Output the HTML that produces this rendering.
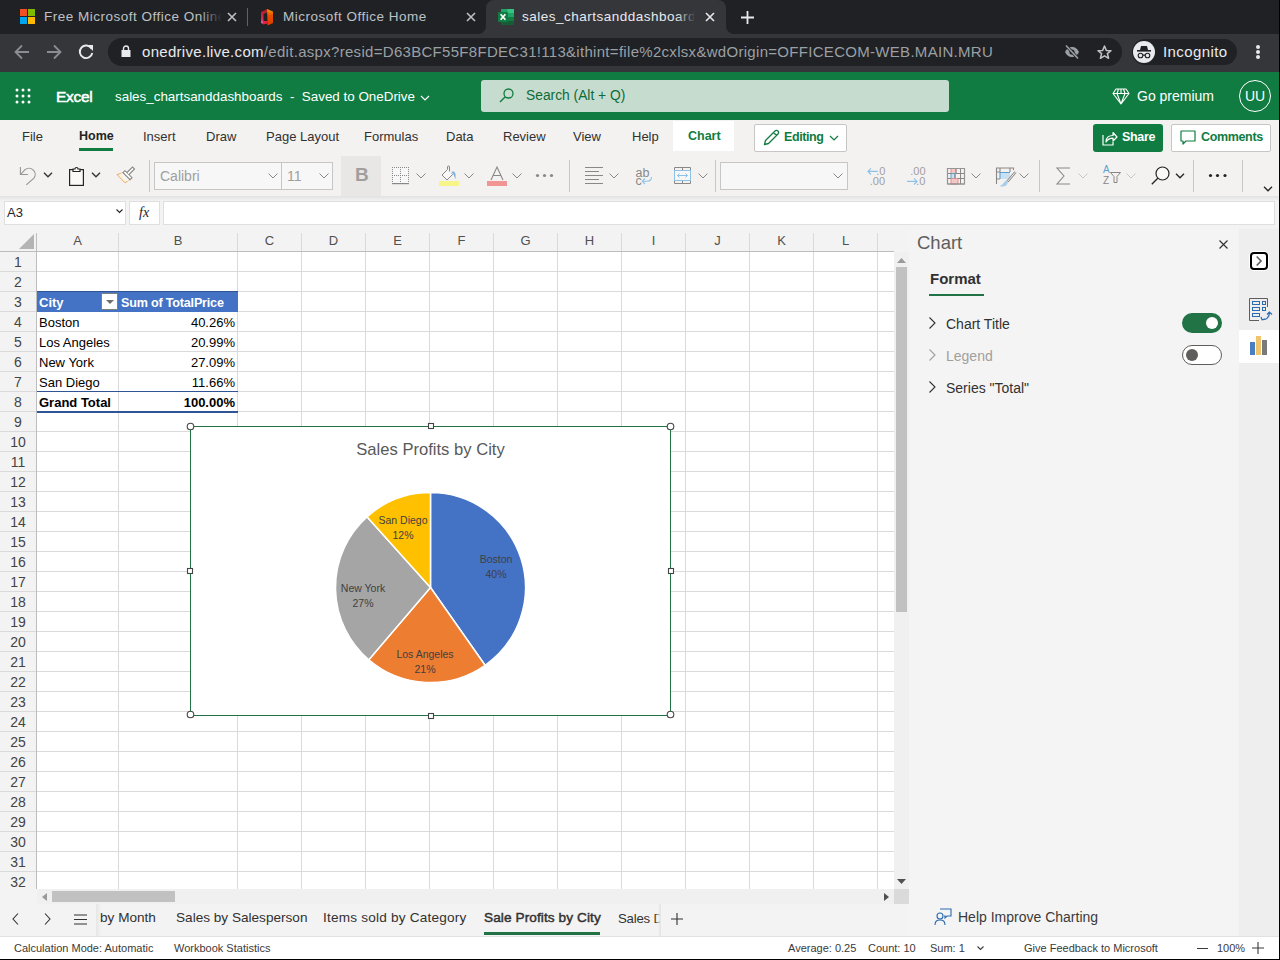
<!DOCTYPE html>
<html><head><meta charset="utf-8">
<style>
*{box-sizing:border-box;margin:0;padding:0}
html,body{width:1280px;height:960px;overflow:hidden;background:#fff;font-family:"Liberation Sans",sans-serif}
.a{position:absolute}
svg{position:absolute;overflow:visible}
.t{position:absolute;white-space:nowrap;line-height:1}
</style></head><body>
<!-- ===== CHROME TAB STRIP ===== -->
<div class="a" style="left:0;top:0;width:1280px;height:34px;background:#202124"></div>
<!-- tab1 -->
<div class="a" style="left:20px;top:9px;width:7px;height:7px;background:#f25022"></div>
<div class="a" style="left:28px;top:9px;width:7px;height:7px;background:#7fba00"></div>
<div class="a" style="left:20px;top:17px;width:7px;height:7px;background:#00a4ef"></div>
<div class="a" style="left:28px;top:17px;width:7px;height:7px;background:#ffb900"></div>
<div class="t" style="left:44px;top:10px;font-size:13.5px;letter-spacing:0.5px;color:#bdc1c6;width:178px;overflow:hidden">Free Microsoft Office Online</div>
<div class="a" style="left:200px;top:4px;width:22px;height:26px;background:linear-gradient(90deg,rgba(32,33,36,0),#202124)"></div>
<svg style="left:227px;top:12px" width="10" height="10"><path d="M1 1L9 9M9 1L1 9" stroke="#bdc1c6" stroke-width="1.6"/></svg>
<div class="a" style="left:247px;top:8px;width:1px;height:18px;background:#5f6368"></div>
<!-- tab2 -->
<svg style="left:260px;top:8px" width="14" height="18"><defs><linearGradient id="og" x1="0" y1="0" x2="0" y2="1"><stop offset="0" stop-color="#f0a000"/><stop offset="0.4" stop-color="#e84d00"/><stop offset="1" stop-color="#e03c00"/></linearGradient><linearGradient id="rg" x1="0" y1="0" x2="0" y2="1"><stop offset="0" stop-color="#b01818"/><stop offset="0.7" stop-color="#d33060"/><stop offset="1" stop-color="#f070c0"/></linearGradient></defs><path d="M1 4L7 1V4.5L3.5 6V16L1 15Z" fill="url(#rg)"/><path d="M3 16.5L7.5 15.5V13H3Z" fill="#e8203c"/><path d="M7 1L13 3.5V15L7.5 17.5V13Z" fill="url(#og)"/></svg>
<div class="t" style="left:283px;top:10px;font-size:13.5px;letter-spacing:0.5px;color:#bdc1c6">Microsoft Office Home</div>
<svg style="left:466px;top:12px" width="10" height="10"><path d="M1 1L9 9M9 1L1 9" stroke="#bdc1c6" stroke-width="1.6"/></svg>
<!-- tab3 active -->
<div class="a" style="left:486px;top:0;width:240px;height:34px;background:#35363a;border-radius:8px 8px 0 0"></div><div class="a" style="left:478px;top:26px;width:8px;height:8px;background:radial-gradient(circle at 0 0,#202124 7.5px,#35363a 8.5px)"></div><div class="a" style="left:726px;top:26px;width:8px;height:8px;background:radial-gradient(circle at 100% 0,#202124 7.5px,#35363a 8.5px)"></div>
<svg style="left:497px;top:8px" width="18" height="18"><rect x="4" y="1" width="13" height="4" fill="#21a366"/><rect x="10.5" y="1" width="6.5" height="4" fill="#33c481"/><rect x="4" y="5" width="13" height="4" fill="#21a366"/><rect x="4" y="9" width="13" height="4" fill="#107c41"/><rect x="4" y="13" width="13" height="4" fill="#185c37"/><rect x="1" y="4" width="10" height="10" rx="0.8" fill="#107c41"/><path d="M3.6 6.2L8.4 11.8M8.4 6.2L3.6 11.8" stroke="#fff" stroke-width="1.7"/></svg>
<div class="t" style="left:522px;top:10px;font-size:13.5px;letter-spacing:0.5px;color:#e8eaed;width:172px;overflow:hidden">sales_chartsanddashboards</div>
<div class="a" style="left:676px;top:4px;width:20px;height:26px;background:linear-gradient(90deg,rgba(53,54,58,0),#35363a)"></div>
<svg style="left:705px;top:12px" width="10" height="10"><path d="M1 1L9 9M9 1L1 9" stroke="#e8eaed" stroke-width="1.6"/></svg>
<svg style="left:741px;top:11px" width="13" height="13"><path d="M6.5 0V13M0 6.5H13" stroke="#e8eaed" stroke-width="1.8"/></svg>

<!-- ===== ADDRESS BAR ===== -->
<div class="a" style="left:0;top:34px;width:1280px;height:38px;background:#35363a"></div>
<svg style="left:14px;top:44px" width="16" height="16"><path d="M15 8H2.5M8 1.5L1.5 8L8 14.5" fill="none" stroke="#8a8d91" stroke-width="1.8"/></svg>
<svg style="left:46px;top:44px" width="16" height="16"><path d="M1 8H13.5M8 1.5L14.5 8L8 14.5" fill="none" stroke="#8a8d91" stroke-width="1.8"/></svg>
<svg style="left:78px;top:44px" width="16" height="16"><path d="M13.5 4.5A6.3 6.3 0 1 0 14.3 9" fill="none" stroke="#e8eaed" stroke-width="1.9"/><path d="M9 1H15V7Z" fill="#e8eaed"/></svg>
<div class="a" style="left:108px;top:38px;width:1014px;height:28px;background:#202124;border-radius:14px"></div>
<svg style="left:121px;top:45px" width="10" height="12"><path d="M2.5 5V3.5A2.5 2.5 0 0 1 7.5 3.5V5" fill="none" stroke="#e8eaed" stroke-width="1.4"/><rect x="0.5" y="5" width="9" height="7" fill="#e8eaed"/></svg>
<div class="t" style="left:142px;top:44px;font-size:15px;letter-spacing:0.3px;color:#e8eaed">onedrive.live.com<span style="color:#9aa0a6">/edit.aspx?resid=D63BCF55F8FDEC31!113&amp;ithint=file%2cxlsx&amp;wdOrigin=OFFICECOM-WEB.MAIN.MRU</span></div>

<svg style="left:1064px;top:44px" width="16" height="16"><path d="M1 8C3 4 5.5 3 8 3S13 4 15 8C13 12 10.5 13 8 13S3 12 1 8Z" fill="#9aa0a6"/><circle cx="8" cy="8" r="2.6" fill="#202124"/><path d="M2 1.5L14 14.5" stroke="#202124" stroke-width="3"/><path d="M2 1.5L14 14.5" stroke="#9aa0a6" stroke-width="1.6"/></svg>
<svg style="left:1097px;top:45px" width="15" height="15"><path d="M7.5 1L9.3 5.4L14 5.7L10.4 8.7L11.6 13.3L7.5 10.8L3.4 13.3L4.6 8.7L1 5.7L5.7 5.4Z" fill="none" stroke="#bdc1c6" stroke-width="1.5" stroke-linejoin="round"/></svg>
<div class="a" style="left:1132px;top:39px;width:105px;height:26px;background:#202124;border-radius:13px"></div>
<div class="a" style="left:1133px;top:41px;width:22px;height:22px;background:#e8eaed;border-radius:11px"></div>
<svg style="left:1136px;top:45px" width="16" height="14"><path d="M4 5L5 1H11L12 5Z" fill="#202124"/><rect x="1" y="5" width="14" height="1.6" fill="#202124"/><circle cx="4.5" cy="10.5" r="2.3" fill="none" stroke="#202124" stroke-width="1.1"/><circle cx="11.5" cy="10.5" r="2.3" fill="none" stroke="#202124" stroke-width="1.1"/><path d="M7 10.2H9" stroke="#202124" stroke-width="1.2"/></svg>
<div class="t" style="left:1163px;top:44px;font-size:15px;letter-spacing:0.4px;color:#e8eaed">Incognito</div>
<div class="a" style="left:1256px;top:45px;width:4px;height:4px;border-radius:2px;background:#e8eaed"></div>
<div class="a" style="left:1256px;top:50px;width:4px;height:4px;border-radius:2px;background:#e8eaed"></div>
<div class="a" style="left:1256px;top:55px;width:4px;height:4px;border-radius:2px;background:#e8eaed"></div>

<!-- ===== EXCEL HEADER ===== -->
<div class="a" style="left:0;top:72px;width:1280px;height:48px;background:#107c41"></div>
<svg style="left:15px;top:88px" width="16" height="16"><g fill="#fff"><circle cx="2" cy="2" r="1.5"/><circle cx="8" cy="2" r="1.5"/><circle cx="14" cy="2" r="1.5"/><circle cx="2" cy="8" r="1.5"/><circle cx="8" cy="8" r="1.5"/><circle cx="14" cy="8" r="1.5"/><circle cx="2" cy="14" r="1.5"/><circle cx="8" cy="14" r="1.5"/><circle cx="14" cy="14" r="1.5"/></g></svg>
<div class="t" style="left:56px;top:89px;font-size:15.5px;-webkit-text-stroke:0.5px #fff;letter-spacing:-0.3px;color:#fff">Excel</div>
<div class="t" style="left:115px;top:90px;font-size:13.4px;color:#fff">sales_chartsanddashboards&nbsp; - &nbsp;Saved to OneDrive</div>
<svg style="left:420px;top:95px" width="10" height="6"><path d="M1 1L5 5L9 1" fill="none" stroke="#fff" stroke-width="1.2"/></svg>
<div class="a" style="left:481px;top:80px;width:468px;height:32px;background:#c6dccf;border-radius:3px"></div>
<svg style="left:499px;top:88px" width="15" height="15"><circle cx="9.5" cy="5.5" r="4.5" fill="none" stroke="#107c41" stroke-width="1.3"/><path d="M6.3 8.7L1 14" stroke="#107c41" stroke-width="1.4"/></svg>
<div class="t" style="left:526px;top:89px;font-size:13.8px;color:#0e6b38">Search (Alt + Q)</div>
<svg style="left:1112px;top:88px" width="18" height="17"><path d="M4 1H14L17 5.5L9 16L1 5.5Z M1 5.5H17 M6.5 1L5 5.5L9 16L13 5.5L11.5 1 M9 1V5.5" fill="none" stroke="#fff" stroke-width="1.1" stroke-linejoin="round"/></svg>
<div class="t" style="left:1137px;top:89px;font-size:14px;color:#fff">Go premium</div>
<div class="a" style="left:1239px;top:80px;width:32px;height:32px;border:1px solid #fff;border-radius:16px;color:#fff;font-size:14px;text-align:center;line-height:30px">UU</div>

<!-- ===== RIBBON TABS ===== -->
<div class="a" style="left:0;top:120px;width:1280px;height:77px;background:#f3f2f1"></div>
<div class="t" style="left:22px;top:130px;font-size:13px;color:#323130">File</div>
<div class="t" style="left:79px;top:130px;font-size:12.5px;font-weight:bold;color:#252423">Home</div>
<div class="a" style="left:79px;top:148px;width:34px;height:3px;background:#107c41"></div>
<div class="t" style="left:143px;top:130px;font-size:13px;color:#323130">Insert</div>
<div class="t" style="left:206px;top:130px;font-size:13px;color:#323130">Draw</div>
<div class="t" style="left:266px;top:130px;font-size:13px;color:#323130">Page Layout</div>
<div class="t" style="left:364px;top:130px;font-size:13px;color:#323130">Formulas</div>
<div class="t" style="left:446px;top:130px;font-size:13px;color:#323130">Data</div>
<div class="t" style="left:503px;top:130px;font-size:13px;color:#323130">Review</div>
<div class="t" style="left:573px;top:130px;font-size:13px;color:#323130">View</div>
<div class="t" style="left:632px;top:130px;font-size:13px;color:#323130">Help</div>
<div class="a" style="left:673px;top:121px;width:61px;height:30px;background:#fff"></div>
<div class="t" style="left:688px;top:130px;font-size:12.5px;font-weight:bold;color:#107c41">Chart</div>
<div class="a" style="left:754px;top:124px;width:93px;height:28px;background:#fff;border:1px solid #c8c6c4;border-radius:2px"></div>
<svg style="left:763px;top:129px" width="17" height="17"><path d="M1.5 15.5L2.5 11.5L12 2A1.6 1.6 0 0 1 15 5L5.5 14.5Z M10.5 3.5L13.5 6.5" fill="none" stroke="#107c41" stroke-width="1.3" stroke-linejoin="round"/></svg>
<div class="t" style="left:784px;top:131px;font-size:12.5px;font-weight:bold;letter-spacing:-0.4px;color:#107c41">Editing</div>
<svg style="left:829px;top:135px" width="10" height="6"><path d="M1 1L5 5L9 1" fill="none" stroke="#107c41" stroke-width="1.2"/></svg>
<div class="a" style="left:1093px;top:124px;width:70px;height:28px;background:#107c41;border-radius:3px"></div>
<svg style="left:1102px;top:130px" width="16" height="16"><path d="M1 5V15H11V12" fill="none" stroke="#fff" stroke-width="1.2"/><path d="M4 12C4 7 7 5.5 11 5.5V2.5L15 7L11 11V8.2C8 8.2 5.5 9.5 4 12Z" fill="none" stroke="#fff" stroke-width="1.2" stroke-linejoin="round"/></svg>
<div class="t" style="left:1122px;top:131px;font-size:12.5px;font-weight:bold;letter-spacing:-0.3px;color:#fff">Share</div>
<div class="a" style="left:1171px;top:124px;width:100px;height:28px;background:#fff;border:1px solid #c8c6c4;border-radius:2px"></div>
<svg style="left:1180px;top:130px" width="16" height="15"><path d="M1 1H15V11H6L3 14V11H1Z" fill="none" stroke="#107c41" stroke-width="1.2" stroke-linejoin="round"/></svg>
<div class="t" style="left:1201px;top:131px;font-size:12.5px;font-weight:bold;letter-spacing:-0.35px;color:#107c41">Comments</div>

<!-- ===== TOOLBAR ===== -->
<div class="a" style="left:0;top:196px;width:1280px;height:5px;background:linear-gradient(#e3e2e1,#f3f3f3)"></div>
<svg style="left:14px;top:160px" width="30" height="30"><path d="M6.4 7V14.5H13.9" fill="none" stroke="#979593" stroke-width="1.1"/><path d="M6.6 14.3L11 9.7A6.2 6.2 0 0 1 20.2 17.8L12.3 24.8" fill="none" stroke="#979593" stroke-width="1.1"/></svg>
<svg style="left:43px;top:172px" width="10" height="6"><path d="M1 0.8L5 4.8L9 0.8" fill="none" stroke="#323130" stroke-width="1.3"/></svg>
<svg style="left:69px;top:167px" width="15" height="19"><rect x="0.6" y="2.6" width="13.8" height="15.8" fill="#faf9f8" stroke="#252423" stroke-width="1.2"/><path d="M4 4.5V2H6A1.5 1.5 0 0 1 9 2H11V4.5Z" fill="#faf9f8" stroke="#252423" stroke-width="1.2"/></svg>
<svg style="left:91px;top:172px" width="10" height="6"><path d="M1 0.8L5 4.8L9 0.8" fill="none" stroke="#323130" stroke-width="1.3"/></svg>
<svg style="left:110px;top:162px" width="30" height="26"><path d="M13.5 10.5L7 12.6L15 20.8L20.3 17.3Z" fill="#fdf3dc" stroke="#f0a860" stroke-width="1"/><path d="M13.5 10.5L10 12L17 19.5L20.3 17.3Z" fill="#f7f7f7"/><path d="M13 10.7L15 8.7L22 15.7L20 17.7Z" fill="#fff" stroke="#8a8886" stroke-width="1.1"/><path d="M17 10.5L22.5 5L24.5 7L19 12.5" fill="#fff" stroke="#8a8886" stroke-width="1.1"/></svg>
<div class="a" style="left:149px;top:160px;width:1px;height:32px;background:#c8c6c4"></div>
<div class="a" style="left:154px;top:162px;width:128px;height:28px;background:#f7f7f7;border:1px solid #c8c6c4"></div>
<div class="t" style="left:160px;top:169px;font-size:14px;color:#a19f9d">Calibri</div>
<svg style="left:268px;top:173px" width="10" height="6"><path d="M0.5 0.5L5 5L9.5 0.5" fill="none" stroke="#8a8886" stroke-width="1"/></svg>
<div class="a" style="left:281px;top:162px;width:52px;height:28px;background:#f7f7f7;border:1px solid #c8c6c4"></div>
<div class="t" style="left:287px;top:169px;font-size:14px;color:#a19f9d">11</div>
<svg style="left:319px;top:173px" width="10" height="6"><path d="M0.5 0.5L5 5L9.5 0.5" fill="none" stroke="#8a8886" stroke-width="1"/></svg>
<div class="a" style="left:341px;top:156px;width:40px;height:40px;background:#e8e7e6"></div>
<div class="t" style="left:355px;top:165px;font-size:19px;font-weight:bold;color:#a19f9d">B</div>
<svg style="left:392px;top:167px" width="18" height="18"><rect x="0" y="0" width="17" height="16" fill="#f7f7f7"/><g fill="#8a8886"><rect x="0" y="0" width="1" height="1"/><rect x="0" y="2" width="1" height="1"/><rect x="0" y="4" width="1" height="1"/><rect x="0" y="6" width="1" height="1"/><rect x="0" y="8" width="1" height="1"/><rect x="0" y="10" width="1" height="1"/><rect x="0" y="12" width="1" height="1"/><rect x="0" y="14" width="1" height="1"/><rect x="2" y="0" width="1" height="1"/><rect x="2" y="8" width="1" height="1"/><rect x="4" y="0" width="1" height="1"/><rect x="4" y="8" width="1" height="1"/><rect x="6" y="0" width="1" height="1"/><rect x="6" y="8" width="1" height="1"/><rect x="8" y="0" width="1" height="1"/><rect x="8" y="2" width="1" height="1"/><rect x="8" y="4" width="1" height="1"/><rect x="8" y="6" width="1" height="1"/><rect x="8" y="8" width="1" height="1"/><rect x="8" y="10" width="1" height="1"/><rect x="8" y="12" width="1" height="1"/><rect x="8" y="14" width="1" height="1"/><rect x="10" y="0" width="1" height="1"/><rect x="10" y="8" width="1" height="1"/><rect x="12" y="0" width="1" height="1"/><rect x="12" y="8" width="1" height="1"/><rect x="14" y="0" width="1" height="1"/><rect x="14" y="8" width="1" height="1"/><rect x="16" y="0" width="1" height="1"/><rect x="16" y="2" width="1" height="1"/><rect x="16" y="4" width="1" height="1"/><rect x="16" y="6" width="1" height="1"/><rect x="16" y="8" width="1" height="1"/><rect x="16" y="10" width="1" height="1"/><rect x="16" y="12" width="1" height="1"/><rect x="16" y="14" width="1" height="1"/></g><rect x="0" y="16" width="17" height="1.2" fill="#8a8886"/></svg>
<svg style="left:416px;top:173px" width="10" height="6"><path d="M0.5 0.5L5 5L9.5 0.5" fill="none" stroke="#8a8886" stroke-width="1"/></svg>
<svg style="left:436px;top:162px" width="26" height="26"><path d="M11.5 7.5V5A1 1 0 0 1 13.5 5V10.5" fill="none" stroke="#8a8886" stroke-width="1"/><path d="M11.5 7.5L6 13L11 18L16.5 12.5L15.5 11.5" fill="#f7f7f7" stroke="#8a8886" stroke-width="1"/><path d="M15.5 10C18.5 8.5 20.3 10.5 19.5 17.5C18.5 14.5 17.8 12.5 15.5 10Z" fill="#7fb2e0"/><rect x="3" y="19" width="20" height="5" fill="#f7f58a"/></svg>
<svg style="left:464px;top:173px" width="10" height="6"><path d="M0.5 0.5L5 5L9.5 0.5" fill="none" stroke="#8a8886" stroke-width="1"/></svg>
<svg style="left:487px;top:166px" width="20" height="21"><path d="M4 14L10 1L16 14M6 9.5H14" fill="none" stroke="#8a8886" stroke-width="1.1"/><rect x="0" y="15" width="20" height="5" fill="#f29494"/></svg>
<svg style="left:512px;top:173px" width="10" height="6"><path d="M0.5 0.5L5 5L9.5 0.5" fill="none" stroke="#8a8886" stroke-width="1"/></svg>
<svg style="left:535px;top:173px" width="20" height="5"><circle cx="2.5" cy="2.5" r="1.6" fill="#8a8886"/><circle cx="9.5" cy="2.5" r="1.6" fill="#8a8886"/><circle cx="16.5" cy="2.5" r="1.6" fill="#8a8886"/></svg>
<div class="a" style="left:569px;top:160px;width:1px;height:32px;background:#c8c6c4"></div>
<svg style="left:585px;top:167px" width="19" height="18"><path d="M0 0.5H18M0 4.5H14M0 8.5H18M0 12.5H14M0 16.5H18" fill="none" stroke="#8a8886" stroke-width="1"/></svg>
<svg style="left:609px;top:173px" width="10" height="6"><path d="M0.5 0.5L5 5L9.5 0.5" fill="none" stroke="#8a8886" stroke-width="1"/></svg>
<svg style="left:630px;top:160px" width="30" height="30"><text x="5.5" y="16.5" font-size="12.5" fill="#8a8886" font-family="Liberation Sans">ab</text><text x="5.5" y="24.5" font-size="12.5" fill="#8a8886" font-family="Liberation Sans">c</text><path d="M21.5 17C21.5 20 19.5 21.3 16.5 21.3H12.5M15 18.5L12.3 21.3L15 24" fill="none" stroke="#8ec1e6" stroke-width="1.1"/></svg>
<svg style="left:674px;top:167px" width="18" height="18"><path d="M0.5 0.5H16.5V16.5H0.5Z M0.5 3.5H16.5 M0.5 13.5H16.5 M8.5 0.5V3.5 M8.5 13.5V16.5" fill="none" stroke="#8a8886" stroke-width="1"/><rect x="0.5" y="3.5" width="16" height="10" fill="#f7f7f7" stroke="#8ec1e6" stroke-width="1"/><path d="M3.5 8.5H13.5M5.5 6.5L3.5 8.5L5.5 10.5M11.5 6.5L13.5 8.5L11.5 10.5" fill="none" stroke="#8ec1e6" stroke-width="1"/></svg>
<svg style="left:698px;top:173px" width="10" height="6"><path d="M0.5 0.5L5 5L9.5 0.5" fill="none" stroke="#8a8886" stroke-width="1"/></svg>
<div class="a" style="left:715px;top:160px;width:1px;height:32px;background:#c8c6c4"></div>
<div class="a" style="left:720px;top:162px;width:128px;height:28px;background:#f7f7f7;border:1px solid #c8c6c4"></div>
<svg style="left:833px;top:173px" width="10" height="6"><path d="M0.5 0.5L5 5L9.5 0.5" fill="none" stroke="#8a8886" stroke-width="1"/></svg>
<svg style="left:860px;top:160px" width="70" height="30"><g font-family="Liberation Sans" font-size="11" fill="#a19f9d"><text x="16.3" y="15">.0</text><text x="9.8" y="25">.00</text><text x="50.3" y="15">.00</text><text x="56.3" y="25">.0</text></g><path d="M17.8 11.4H8M11 8.3L7.9 11.4L11 14.5" fill="none" stroke="#8ec1e6" stroke-width="1.1"/><path d="M47 21.4H57M54 18.3L57.1 21.4L54 24.5" fill="none" stroke="#8ec1e6" stroke-width="1.1"/></svg>
<svg style="left:947px;top:168px" width="19" height="17"><rect x="4" y="0.5" width="5" height="5" fill="#f4c7c7" stroke="#e88d8d" stroke-width="1"/><rect x="4" y="5.5" width="4" height="5" fill="#c9e0f2" stroke="#5ba0d0" stroke-width="1"/><rect x="4" y="10.5" width="7" height="5.5" fill="#f4c7c7" stroke="#e88d8d" stroke-width="1"/><path d="M0.5 0.5H17.5V16H0.5Z M0.5 5.5H4 M9 5.5H17.5 M0.5 10.5H4 M11 10.5H17.5 M13.5 0.5V16 M9 0.5V5.5 M8 5.5V10.5" fill="none" stroke="#8a8886" stroke-width="1"/><path d="M0.5 0.5H17.5V16H0.5Z" fill="none" stroke="#979593" stroke-width="1.2"/></svg>
<svg style="left:971px;top:173px" width="10" height="6"><path d="M0.5 0.5L5 5L9.5 0.5" fill="none" stroke="#8a8886" stroke-width="1"/></svg>
<svg style="left:996px;top:167px" width="22" height="21"><path d="M0.5 17V1H17.5V3 M0.5 5H4 M0.5 12H4 M4 1V5 M14 1V5" fill="none" stroke="#8a8886" stroke-width="1.1"/><path d="M4 5.5H14V12H4Z" fill="#c9e0f2"/><path d="M4 12V5.5H14" fill="none" stroke="#5ba0d0" stroke-width="1.1"/><path d="M19.5 5L11.5 14.5" stroke="#8a8886" stroke-width="2.6"/><path d="M19.5 5L11.5 14.5" stroke="#f3f2f1" stroke-width="1"/><path d="M10.5 13.5C8 14 7.5 18 3.5 19C7 20.5 11.5 19 12 15Z" fill="#a8cde8"/></svg>
<svg style="left:1019px;top:173px" width="10" height="6"><path d="M0.5 0.5L5 5L9.5 0.5" fill="none" stroke="#8a8886" stroke-width="1"/></svg>
<div class="a" style="left:1039px;top:160px;width:1px;height:32px;background:#c8c6c4"></div>
<svg style="left:1056px;top:167px" width="15" height="18"><path d="M14 1H1L8 9L1 17H14" fill="none" stroke="#8a8886" stroke-width="1.1"/></svg>
<svg style="left:1078px;top:173px" width="10" height="6"><path d="M0.5 0.5L5 5L9.5 0.5" fill="none" stroke="#c8c6c4" stroke-width="1"/></svg>
<div class="t" style="left:1103px;top:165px;font-size:10px;color:#5ba0d0;line-height:10px">A</div>
<div class="t" style="left:1103px;top:176px;font-size:10px;color:#8a8886;line-height:10px">Z</div>
<svg style="left:1110px;top:172px" width="11" height="11"><path d="M0.5 0.5H10.5L7 4.5V10.5H4V4.5Z" fill="none" stroke="#8a8886" stroke-width="1"/></svg>
<svg style="left:1126px;top:173px" width="10" height="6"><path d="M0.5 0.5L5 5L9.5 0.5" fill="none" stroke="#c8c6c4" stroke-width="1"/></svg>
<svg style="left:1151px;top:166px" width="19" height="20"><circle cx="11.5" cy="7.5" r="6.5" fill="#faf9f8" stroke="#252423" stroke-width="1.2"/><path d="M6.8 12.2L0.8 18.2" stroke="#252423" stroke-width="1.3"/></svg>
<svg style="left:1175px;top:173px" width="10" height="6"><path d="M1 0.8L5 4.8L9 0.8" fill="none" stroke="#252423" stroke-width="1.3"/></svg>
<div class="a" style="left:1193px;top:160px;width:1px;height:32px;background:#c8c6c4"></div>
<svg style="left:1208px;top:173px" width="20" height="5"><circle cx="2.5" cy="2.5" r="1.6" fill="#252423"/><circle cx="9.5" cy="2.5" r="1.6" fill="#252423"/><circle cx="17" cy="2.5" r="1.6" fill="#252423"/></svg>
<div class="a" style="left:1242px;top:160px;width:1px;height:32px;background:#c8c6c4"></div>
<svg style="left:1263px;top:186px" width="10" height="6"><path d="M1 0.8L5 4.8L9 0.8" fill="none" stroke="#252423" stroke-width="1.3"/></svg>

<!-- ===== FORMULA BAR ===== -->
<div class="a" style="left:0;top:201px;width:1280px;height:25px;background:#f3f3f3"></div>
<div class="a" style="left:4px;top:201px;width:122px;height:24px;background:#fff;border:1px solid #e1dfdd"></div>
<div class="t" style="left:7px;top:206px;font-size:13px;color:#252423">A3</div>
<svg style="left:116px;top:209px" width="7" height="5"><path d="M0.5 0.5L3.5 3.5L6.5 0.5" fill="none" stroke="#252423" stroke-width="1.1"/></svg>
<div class="a" style="left:129px;top:201px;width:31px;height:24px;background:#fff;border:1px solid #e1dfdd"></div>
<div class="t" style="left:139px;top:206px;font-size:14px;font-style:italic;font-family:'Liberation Serif',serif;color:#252423">fx</div>
<div class="a" style="left:163px;top:201px;width:1112px;height:24px;background:#fff;border:1px solid #e1dfdd"></div>

<!-- ===== GRID ===== -->
<div class="a" style="left:0;top:226px;width:909px;height:663px;background:#fff"></div>
<div class="a" style="left:0;top:226px;width:909px;height:26px;background:#f3f3f3"></div>
<div class="a" style="left:0;top:226px;width:36px;height:663px;background:#f3f3f3"></div>
<svg style="left:0;top:0" width="909" height="889"><g stroke="#dadada" stroke-width="1"><path d="M118.5 233V889"/><path d="M237.5 233V889"/><path d="M301.5 233V889"/><path d="M365.5 233V889"/><path d="M429.5 233V889"/><path d="M493.5 233V889"/><path d="M557.5 233V889"/><path d="M621.5 233V889"/><path d="M685.5 233V889"/><path d="M749.5 233V889"/><path d="M813.5 233V889"/><path d="M877.5 233V889"/><path d="M0 271.5H894"/><path d="M0 291.5H894"/><path d="M0 311.5H894"/><path d="M0 331.5H894"/><path d="M0 351.5H894"/><path d="M0 371.5H894"/><path d="M0 391.5H894"/><path d="M0 411.5H894"/><path d="M0 431.5H894"/><path d="M0 451.5H894"/><path d="M0 471.5H894"/><path d="M0 491.5H894"/><path d="M0 511.5H894"/><path d="M0 531.5H894"/><path d="M0 551.5H894"/><path d="M0 571.5H894"/><path d="M0 591.5H894"/><path d="M0 611.5H894"/><path d="M0 631.5H894"/><path d="M0 651.5H894"/><path d="M0 671.5H894"/><path d="M0 691.5H894"/><path d="M0 711.5H894"/><path d="M0 731.5H894"/><path d="M0 751.5H894"/><path d="M0 771.5H894"/><path d="M0 791.5H894"/><path d="M0 811.5H894"/><path d="M0 831.5H894"/><path d="M0 851.5H894"/><path d="M0 871.5H894"/></g>
<path d="M0 251.5H894" stroke="#bdbdbd" stroke-width="1"/><path d="M36.5 233V889" stroke="#bdbdbd" stroke-width="1"/>
<path d="M19 249H34V234Z" fill="#b4b4b4"/></svg>
<div class="t" style="left:37px;top:234px;width:81px;text-align:center;font-size:13px;color:#505050">A</div><div class="t" style="left:119px;top:234px;width:118px;text-align:center;font-size:13px;color:#505050">B</div><div class="t" style="left:238px;top:234px;width:63px;text-align:center;font-size:13px;color:#505050">C</div><div class="t" style="left:302px;top:234px;width:63px;text-align:center;font-size:13px;color:#505050">D</div><div class="t" style="left:366px;top:234px;width:63px;text-align:center;font-size:13px;color:#505050">E</div><div class="t" style="left:430px;top:234px;width:63px;text-align:center;font-size:13px;color:#505050">F</div><div class="t" style="left:494px;top:234px;width:63px;text-align:center;font-size:13px;color:#505050">G</div><div class="t" style="left:558px;top:234px;width:63px;text-align:center;font-size:13px;color:#505050">H</div><div class="t" style="left:622px;top:234px;width:63px;text-align:center;font-size:13px;color:#505050">I</div><div class="t" style="left:686px;top:234px;width:63px;text-align:center;font-size:13px;color:#505050">J</div><div class="t" style="left:750px;top:234px;width:63px;text-align:center;font-size:13px;color:#505050">K</div><div class="t" style="left:814px;top:234px;width:63px;text-align:center;font-size:13px;color:#505050">L</div>
<div class="t" style="left:0;top:255px;width:36px;text-align:center;font-size:14px;color:#444">1</div><div class="t" style="left:0;top:275px;width:36px;text-align:center;font-size:14px;color:#444">2</div><div class="t" style="left:0;top:295px;width:36px;text-align:center;font-size:14px;color:#444">3</div><div class="t" style="left:0;top:315px;width:36px;text-align:center;font-size:14px;color:#444">4</div><div class="t" style="left:0;top:335px;width:36px;text-align:center;font-size:14px;color:#444">5</div><div class="t" style="left:0;top:355px;width:36px;text-align:center;font-size:14px;color:#444">6</div><div class="t" style="left:0;top:375px;width:36px;text-align:center;font-size:14px;color:#444">7</div><div class="t" style="left:0;top:395px;width:36px;text-align:center;font-size:14px;color:#444">8</div><div class="t" style="left:0;top:415px;width:36px;text-align:center;font-size:14px;color:#444">9</div><div class="t" style="left:0;top:435px;width:36px;text-align:center;font-size:14px;color:#444">10</div><div class="t" style="left:0;top:455px;width:36px;text-align:center;font-size:14px;color:#444">11</div><div class="t" style="left:0;top:475px;width:36px;text-align:center;font-size:14px;color:#444">12</div><div class="t" style="left:0;top:495px;width:36px;text-align:center;font-size:14px;color:#444">13</div><div class="t" style="left:0;top:515px;width:36px;text-align:center;font-size:14px;color:#444">14</div><div class="t" style="left:0;top:535px;width:36px;text-align:center;font-size:14px;color:#444">15</div><div class="t" style="left:0;top:555px;width:36px;text-align:center;font-size:14px;color:#444">16</div><div class="t" style="left:0;top:575px;width:36px;text-align:center;font-size:14px;color:#444">17</div><div class="t" style="left:0;top:595px;width:36px;text-align:center;font-size:14px;color:#444">18</div><div class="t" style="left:0;top:615px;width:36px;text-align:center;font-size:14px;color:#444">19</div><div class="t" style="left:0;top:635px;width:36px;text-align:center;font-size:14px;color:#444">20</div><div class="t" style="left:0;top:655px;width:36px;text-align:center;font-size:14px;color:#444">21</div><div class="t" style="left:0;top:675px;width:36px;text-align:center;font-size:14px;color:#444">22</div><div class="t" style="left:0;top:695px;width:36px;text-align:center;font-size:14px;color:#444">23</div><div class="t" style="left:0;top:715px;width:36px;text-align:center;font-size:14px;color:#444">24</div><div class="t" style="left:0;top:735px;width:36px;text-align:center;font-size:14px;color:#444">25</div><div class="t" style="left:0;top:755px;width:36px;text-align:center;font-size:14px;color:#444">26</div><div class="t" style="left:0;top:775px;width:36px;text-align:center;font-size:14px;color:#444">27</div><div class="t" style="left:0;top:795px;width:36px;text-align:center;font-size:14px;color:#444">28</div><div class="t" style="left:0;top:815px;width:36px;text-align:center;font-size:14px;color:#444">29</div><div class="t" style="left:0;top:835px;width:36px;text-align:center;font-size:14px;color:#444">30</div><div class="t" style="left:0;top:855px;width:36px;text-align:center;font-size:14px;color:#444">31</div><div class="t" style="left:0;top:875px;width:36px;text-align:center;font-size:14px;color:#444">32</div>
<!-- pivot -->
<div class="a" style="left:37px;top:291px;width:201px;height:21px;background:#4472c4;border-top:1px solid #2f5597"></div>
<div class="t" style="left:39px;top:296px;font-size:13px;font-weight:bold;color:#fff">City</div>
<div class="t" style="left:121px;top:297px;font-size:12.6px;font-weight:bold;letter-spacing:-0.2px;color:#fff">Sum of TotalPrice</div>
<div class="a" style="left:101px;top:293px;width:17px;height:17px;background:#fff;border:1px solid #7f7f7f"></div>
<svg style="left:106px;top:300px" width="8" height="4"><path d="M0 0H8L4 4Z" fill="#6f6f6f"/></svg>
<div class="t" style="left:39px;top:316px;font-size:13px;color:#000">Boston</div>
<div class="t" style="left:39px;top:336px;font-size:13px;color:#000">Los Angeles</div>
<div class="t" style="left:39px;top:356px;font-size:13px;color:#000">New York</div>
<div class="t" style="left:39px;top:376px;font-size:13px;color:#000">San Diego</div>
<div class="t" style="left:39px;top:396px;font-size:13px;font-weight:bold;color:#000">Grand Total</div>
<div class="t" style="left:119px;top:316px;width:116px;text-align:right;font-size:13px;color:#000">40.26%</div>
<div class="t" style="left:119px;top:336px;width:116px;text-align:right;font-size:13px;color:#000">20.99%</div>
<div class="t" style="left:119px;top:356px;width:116px;text-align:right;font-size:13px;color:#000">27.09%</div>
<div class="t" style="left:119px;top:376px;width:116px;text-align:right;font-size:13px;color:#000">11.66%</div>
<div class="t" style="left:119px;top:396px;width:116px;text-align:right;font-size:13px;font-weight:bold;color:#000">100.00%</div>
<div class="a" style="left:37px;top:391px;width:201px;height:1px;background:#2f5597"></div>
<div class="a" style="left:37px;top:411px;width:201px;height:2px;background:#2f5597"></div>
<!-- scrollbars -->
<div class="a" style="left:894px;top:252px;width:15px;height:637px;background:#f0f0f0"></div>
<svg style="left:897px;top:258px" width="9" height="5"><path d="M0 5H9L4.5 0Z" fill="#9a9a9a"/></svg>
<div class="a" style="left:896px;top:267px;width:11px;height:345px;background:#c1c1c1"></div>
<svg style="left:897px;top:879px" width="9" height="5"><path d="M0 0H9L4.5 5Z" fill="#505050"/></svg>
<div class="a" style="left:37px;top:889px;width:857px;height:15px;background:#f0f0f0"></div>
<svg style="left:42px;top:893px" width="5" height="8"><path d="M5 0V8L0 4Z" fill="#9a9a9a"/></svg>
<div class="a" style="left:52px;top:891px;width:123px;height:11px;background:#c1c1c1"></div>
<svg style="left:884px;top:893px" width="5" height="8"><path d="M0 0V8L5 4Z" fill="#505050"/></svg>
<div class="a" style="left:894px;top:889px;width:15px;height:15px;background:#dadada"></div>

<!-- ===== CHART ===== -->
<div class="a" style="left:190px;top:426px;width:481px;height:290px;background:#fff;border:1px solid #217346"></div>
<div class="t" style="left:190px;top:442px;width:481px;text-align:center;font-size:16.6px;color:#595959">Sales Profits by City</div>
<svg style="left:0;top:0" width="700" height="720"><path d="M430.5 587.5L430.50 492.50A95 95 0 0 1 485.08 665.26Z" fill="#4472c4" stroke="#fff" stroke-width="1.5" stroke-linejoin="round"/><path d="M430.5 587.5L485.08 665.26A95 95 0 0 1 368.80 659.74Z" fill="#ed7d31" stroke="#fff" stroke-width="1.5" stroke-linejoin="round"/><path d="M430.5 587.5L368.80 659.74A95 95 0 0 1 366.96 516.87Z" fill="#a5a5a5" stroke="#fff" stroke-width="1.5" stroke-linejoin="round"/><path d="M430.5 587.5L366.96 516.87A95 95 0 0 1 430.50 492.50Z" fill="#ffc000" stroke="#fff" stroke-width="1.5" stroke-linejoin="round"/>
<g fill="#fff" stroke="#454545" stroke-width="1.1">
<circle cx="190.5" cy="426.5" r="3.3"/><circle cx="670.5" cy="426.5" r="3.3"/><circle cx="190.5" cy="714.5" r="3.3"/><circle cx="670.5" cy="714.5" r="3.3"/>
<rect x="428.5" y="423.5" width="5" height="5"/><rect x="428.5" y="713.5" width="5" height="5"/><rect x="187.5" y="568.5" width="5" height="5"/><rect x="668.5" y="568.5" width="5" height="5"/>
</g></svg>
<div class="t" style="left:456px;top:552px;width:80px;text-align:center;font-size:10.5px;line-height:15px;color:#404040">Boston<br>40%</div>
<div class="t" style="left:385px;top:647px;width:80px;text-align:center;font-size:10.5px;line-height:15px;color:#404040">Los Angeles<br>21%</div>
<div class="t" style="left:323px;top:581px;width:80px;text-align:center;font-size:10.5px;line-height:15px;color:#404040">New York<br>27%</div>
<div class="t" style="left:363px;top:513px;width:80px;text-align:center;font-size:10.5px;line-height:15px;color:#404040">San Diego<br>12%</div>

<!-- ===== RIGHT PANE ===== -->
<div class="a" style="left:909px;top:226px;width:330px;height:710px;background:#f4f4f4"></div>
<div class="a" style="left:909px;top:226px;width:371px;height:3px;background:#f3f3f3"></div><div class="a" style="left:1239px;top:229px;width:40px;height:707px;background:#eeeeee"></div>
<div class="t" style="left:917px;top:234px;font-size:18.5px;color:#605e5c">Chart</div>
<svg style="left:1219px;top:240px" width="9" height="9"><path d="M0.5 0.5L8.5 8.5M8.5 0.5L0.5 8.5" stroke="#323130" stroke-width="1.1"/></svg>
<div class="t" style="left:930px;top:271px;font-size:15px;font-weight:bold;color:#323130">Format</div>
<div class="a" style="left:929px;top:294px;width:55px;height:2px;background:#217346"></div>
<svg style="left:929px;top:317px" width="7" height="12"><path d="M0.5 0.5L6 6L0.5 11.5" fill="none" stroke="#323130" stroke-width="1.1"/></svg>
<div class="t" style="left:946px;top:317px;font-size:14px;color:#323130">Chart Title</div>
<svg style="left:929px;top:349px" width="7" height="12"><path d="M0.5 0.5L6 6L0.5 11.5" fill="none" stroke="#a19f9d" stroke-width="1.1"/></svg>
<div class="t" style="left:946px;top:349px;font-size:14px;color:#a19f9d">Legend</div>
<svg style="left:929px;top:381px" width="7" height="12"><path d="M0.5 0.5L6 6L0.5 11.5" fill="none" stroke="#323130" stroke-width="1.1"/></svg>
<div class="t" style="left:946px;top:381px;font-size:14px;color:#323130">Series "Total"</div>
<div class="a" style="left:1182px;top:313px;width:40px;height:20px;background:#217346;border-radius:10px"></div>
<div class="a" style="left:1206px;top:317px;width:12px;height:12px;background:#fff;border-radius:6px"></div>
<div class="a" style="left:1182px;top:345px;width:40px;height:20px;background:#fff;border:1px solid #605e5c;border-radius:10px"></div>
<div class="a" style="left:1186px;top:349px;width:12px;height:12px;background:#605e5c;border-radius:6px"></div>
<!-- side strip icons -->
<div class="a" style="left:1250px;top:252px;width:18px;height:18px;border:2px solid #000;border-radius:4px;background:#fff;box-shadow:0 0 0 1px #fff"></div>
<svg style="left:1256px;top:256px" width="6" height="10"><path d="M0.7 0.5L5 5L0.7 9.5" fill="none" stroke="#605e5c" stroke-width="1.6"/></svg>
<svg style="left:1248px;top:297px" width="26" height="26"><path d="M11 23.5H1.5V1.5H19.5V10" fill="none" stroke="#605e5c" stroke-width="1"/><g fill="none" stroke="#2b6cb0" stroke-width="1"><rect x="4.5" y="4.5" width="7" height="3"/><rect x="4.5" y="10.5" width="7" height="3"/><rect x="4.5" y="16.5" width="7" height="3"/><rect x="14.5" y="4.5" width="3" height="3"/><rect x="14.5" y="10.5" width="3" height="3"/></g><path d="M14 22.5C18 23.5 21.5 20 21.5 15.5M19 17.5L21.5 15L24 17.5M13 20L14 22.8L16.8 22" fill="none" stroke="#2b6cb0" stroke-width="1.2"/></svg>
<div class="a" style="left:1239px;top:330px;width:40px;height:33px;background:#fff"></div>
<div class="a" style="left:1250px;top:342px;width:5px;height:13px;background:#4a7fc1"></div>
<div class="a" style="left:1256px;top:336px;width:5px;height:19px;background:#f0c36d"></div>
<div class="a" style="left:1262px;top:340px;width:5px;height:15px;background:#7a7a7a"></div>
<!-- help improve -->
<svg style="left:934px;top:908px" width="18" height="18"><circle cx="6" cy="8" r="3" fill="none" stroke="#2b6cb0" stroke-width="1.1"/><path d="M1 17C1 13 3 12 6 12S11 13 11 17" fill="none" stroke="#2b6cb0" stroke-width="1.1"/><path d="M6 1H17V8H13L11 10V8H10" fill="none" stroke="#2b6cb0" stroke-width="1.1"/></svg>
<div class="t" style="left:958px;top:910px;font-size:14px;color:#3b3a39">Help Improve Charting</div>

<!-- ===== SHEET TABS ===== -->
<div class="a" style="left:0;top:889px;width:37px;height:15px;background:#f3f3f3"></div><div class="a" style="left:0;top:904px;width:909px;height:32px;background:#f3f3f3"></div>
<div class="a" style="left:0;top:936px;width:1280px;height:1px;background:#e1e1e1"></div>
<svg style="left:12px;top:913px" width="7" height="12"><path d="M6 0.5L1 6L6 11.5" fill="none" stroke="#323130" stroke-width="1.1"/></svg>
<svg style="left:44px;top:913px" width="7" height="12"><path d="M1 0.5L6 6L1 11.5" fill="none" stroke="#323130" stroke-width="1.1"/></svg>
<svg style="left:74px;top:914px" width="13" height="11"><path d="M0 1H13M0 5.5H13M0 10H13" stroke="#323130" stroke-width="1.1"/></svg>
<div class="a" style="left:96px;top:904px;width:5px;height:32px;background:linear-gradient(90deg,#e6e6e6,#f3f3f3)"></div>
<div class="t" style="left:100px;top:911px;font-size:13.6px;color:#323130">by Month</div>
<div class="t" style="left:176px;top:911px;font-size:13.6px;color:#323130">Sales by Salesperson</div>
<div class="t" style="left:323px;top:911px;font-size:13.6px;letter-spacing:0.2px;color:#323130">Items sold by Category</div>
<div class="t" style="left:484px;top:911px;font-size:13.6px;-webkit-text-stroke:0.45px #323130;letter-spacing:0.1px;color:#323130">Sale Profits by City</div>
<div class="a" style="left:484px;top:932px;width:116px;height:3px;background:#217346"></div>
<div class="t" style="left:618px;top:911px;font-size:13.2px;letter-spacing:-0.2px;color:#323130;width:42px;overflow:hidden;line-height:16px;height:16px">Sales&nbsp;D</div>
<div class="a" style="left:655px;top:904px;width:6px;height:32px;background:linear-gradient(90deg,rgba(243,243,243,0),rgba(243,243,243,0.6) 50%,#e3e3e3)"></div>
<svg style="left:671px;top:913px" width="12" height="12"><path d="M6 0V12M0 6H12" stroke="#323130" stroke-width="1.1"/></svg>

<!-- ===== STATUS BAR ===== -->
<div class="a" style="left:0;top:937px;width:1280px;height:23px;background:#fff"></div>
<div class="t" style="left:14px;top:943px;font-size:11px;color:#3b3a39">Calculation Mode: Automatic</div>
<div class="t" style="left:174px;top:943px;font-size:11px;color:#3b3a39">Workbook Statistics</div>
<div class="t" style="left:788px;top:943px;font-size:11px;color:#3b3a39">Average: 0.25</div>
<div class="t" style="left:868px;top:943px;font-size:11px;color:#3b3a39">Count: 10</div>
<div class="t" style="left:930px;top:943px;font-size:11px;color:#3b3a39">Sum: 1</div>
<svg style="left:977px;top:946px" width="7" height="5"><path d="M0.5 0.5L3.5 3.5L6.5 0.5" fill="none" stroke="#3b3a39" stroke-width="1.1"/></svg>
<div class="t" style="left:1024px;top:943px;font-size:11px;color:#3b3a39">Give Feedback to Microsoft</div>
<div class="a" style="left:1197px;top:948px;width:11px;height:1px;background:#3b3a39"></div>
<div class="t" style="left:1217px;top:943px;font-size:11px;color:#3b3a39">100%</div>
<svg style="left:1252px;top:942px" width="12" height="12"><path d="M6 0V12M0 6H12" stroke="#3b3a39" stroke-width="1.1"/></svg>
<div class="a" style="left:1279px;top:0;width:1px;height:960px;background:#000"></div>
<div class="a" style="left:0;top:959px;width:1280px;height:1px;background:#000"></div>
</body></html>
